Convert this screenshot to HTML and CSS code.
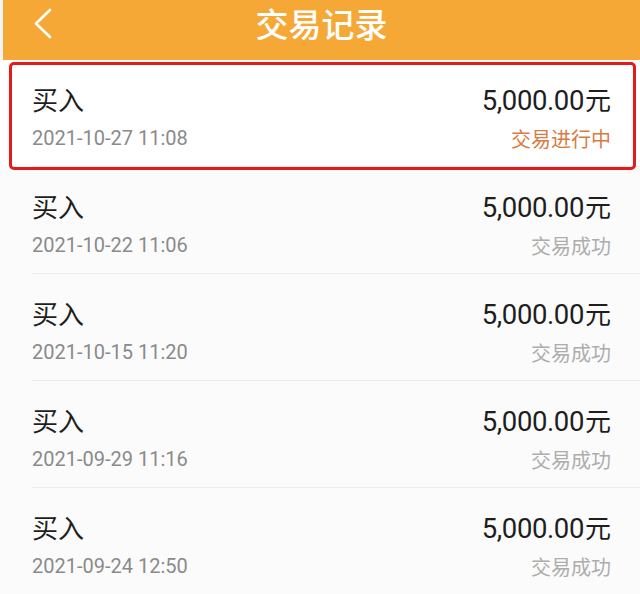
FILE: index.html
```html
<!DOCTYPE html>
<html lang="zh-CN">
  <head>
    <meta charset="UTF-8" />
    <meta name="viewport" content="width=device-width, initial-scale=1" />
    <title>交易记录</title>
    <link rel="stylesheet" href="styles.css">
  </head>
  <body>
    <div id="header">
      <a class="back" href="#">
        <svg width="24" height="34" viewBox="0 0 24 34">
          <polyline points="18,3 4,16.5 18,30" fill="none" stroke="#fff" stroke-width="2.6" stroke-linecap="round" stroke-linejoin="round" />
        </svg>
      </a>
      <h1>交易记录</h1>
    </div>

    <div id="list">
      <div class="row marked">
        <div class="item">
          <div class="line">
            <span class="type">买入</span>
            <span class="amount">5,000.00<span class="unit">元</span></span>
          </div>
          <div class="line">
            <span class="date">2021-10-27 11:08</span>
            <span class="status pending">交易进行中</span>
          </div>
        </div>
      </div>
      <div class="row">
        <div class="item">
          <div class="line">
            <span class="type">买入</span>
            <span class="amount">5,000.00<span class="unit">元</span></span>
          </div>
          <div class="line">
            <span class="date">2021-10-22 11:06</span>
            <span class="status">交易成功</span>
          </div>
        </div>
      </div>
      <div class="row">
        <div class="item">
          <div class="line">
            <span class="type">买入</span>
            <span class="amount">5,000.00<span class="unit">元</span></span>
          </div>
          <div class="line">
            <span class="date">2021-10-15 11:20</span>
            <span class="status">交易成功</span>
          </div>
        </div>
      </div>
      <div class="row">
        <div class="item">
          <div class="line">
            <span class="type">买入</span>
            <span class="amount">5,000.00<span class="unit">元</span></span>
          </div>
          <div class="line">
            <span class="date">2021-09-29 11:16</span>
            <span class="status">交易成功</span>
          </div>
        </div>
      </div>
      <div class="row">
        <div class="item">
          <div class="line">
            <span class="type">买入</span>
            <span class="amount">5,000.00<span class="unit">元</span></span>
          </div>
          <div class="line">
            <span class="date">2021-09-24 12:50</span>
            <span class="status">交易成功</span>
          </div>
        </div>
      </div>
    </div>
  </body>
</html>
```

FILE: styles.css
```css
body {
  margin: 0;
  padding-left: 3px;
  background: #f3f3f3;
  font-family: Roboto, "Noto Sans CJK SC", sans-serif;
  overflow: hidden;
}
#header {
  height: 60px;
  background: #f6a836;
  display: flex;
  justify-content: center;
  position: relative;
  padding-top: 1px;
  box-sizing: border-box;
}
#header h1 {
  margin: 0;
  color: #fff;
  font-family: "Noto Sans CJK SC", sans-serif;
  font-size: 33px;
  font-weight: 500;
  line-height: 44px;
}
.back {
  position: absolute;
  left: 29px;
  top: 7px;
  display: flex;
}
#list {
  margin-left: -3px;
  background: #fbfbfb;
}
.row {
  height: 107px;
}
.row.marked {
  position: relative;
  background: #fff;
}
.row.marked::after {
  content: "";
  position: absolute;
  left: 9px;
  right: 4px;
  top: 2px;
  bottom: -3px;
  border: 3px solid #e21c1c;
  border-radius: 5px;
  box-sizing: border-box;
}
.item {
  margin-left: 32px;
  padding: 23px 29px 0 0;
  height: 107px;
  box-sizing: border-box;
  border-bottom: 1px solid #ececec;
  display: flex;
  flex-direction: column;
  gap: 12px;
}
.line {
  display: flex;
  justify-content: space-between;
  align-items: center;
}
.line:first-child {
  height: 30px;
}
.line:last-child {
  height: 26px;
}
.type {
  font-family: "Noto Sans CJK SC", sans-serif;
  font-size: 26px;
  color: #1e1e1e;
}
.amount {
  font-size: 27.5px;
  letter-spacing: -0.4px;
  color: #1e1e1e;
}
.unit {
  font-family: "Noto Sans CJK SC", sans-serif;
  font-size: 26px;
  letter-spacing: 0;
  margin-left: 1px;
}
.date {
  font-size: 20px;
  color: #8a8a8a;
}
.status {
  font-family: "Noto Sans CJK SC", sans-serif;
  font-size: 20px;
  color: #adadad;
}
.status.pending {
  color: #d97a44;
}
```
